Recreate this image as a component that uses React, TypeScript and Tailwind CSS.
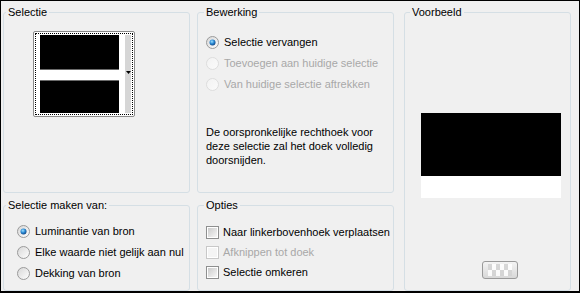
import type { ReactNode } from "react"

const Radio = ({ checked = false, disabled = false }: { checked?: boolean; disabled?: boolean }) => (
  <svg width="13" height="13" viewBox="0 0 13 13" className="shrink-0">
    <defs>
      <linearGradient id={disabled ? "rd" : "rf"} x1="0" y1="0" x2="1" y2="1">
        <stop offset="0" stopColor={disabled ? "#f2f2f2" : "#d6d6d6"} />
        <stop offset="1" stopColor={disabled ? "#fbfbfb" : "#ffffff"} />
      </linearGradient>
      <radialGradient id="rb" cx="0.4" cy="0.35" r="0.7">
        <stop offset="0" stopColor="#9fe0ff" />
        <stop offset="0.5" stopColor="#2a8ad4" />
        <stop offset="1" stopColor="#0d3f7e" />
      </radialGradient>
    </defs>
    <circle cx="6.5" cy="6.5" r="6" fill={`url(#${disabled ? "rd" : "rf"})`} stroke={disabled ? "#dcdcdc" : "#9a9a9a"} strokeWidth="1" />
    {checked && <circle cx="6.5" cy="6.5" r="3" fill="url(#rb)" />}
  </svg>
)

const Check = ({ disabled = false }: { disabled?: boolean }) => (
  <div className={`w-[13px] h-[13px] shrink-0 border p-px ${disabled ? "border-[#c8c8c8] bg-white" : "border-[#8e8f8f] bg-white"}`}>
    <div className={`w-full h-full ${disabled ? "bg-[#f4f4f4]" : "bg-gradient-to-br from-[#cbcbcb] to-[#f7f7f7]"}`} />
  </div>
)

// group box: legend sits on the border, padding goes on the inner div
const Group = ({ title, className, inner, legend, children }: { title: string; className: string; inner: string; legend: string; children: ReactNode }) => (
  <fieldset className={`border border-[#d5dfe5] rounded-[3px] min-w-0 ${className}`}>
    <legend className={`px-[2px] leading-[14px] ${legend}`}>{title}</legend>
    <div className={inner}>{children}</div>
  </fieldset>
)

const Opt = ({ label, checked, disabled }: { label: string; checked?: boolean; disabled?: boolean }) => (
  <div className="flex items-center h-[21px]">
    <Radio checked={checked} disabled={disabled} />
    <span className={`ml-[5px] ${disabled ? "text-[#a8a8a8]" : ""}`}>{label}</span>
  </div>
)

const Box = ({ label, disabled }: { label: string; disabled?: boolean }) => (
  <div className="flex items-center h-[20px]">
    <Check disabled={disabled} />
    <span className={`ml-[4px] ${disabled ? "text-[#a8a8a8]" : ""}`}>{label}</span>
  </div>
)

export default function App() {
  return (
    <div className="w-[580px] h-[293px] bg-[#f0f0f0] border-t border-l border-r border-b-2 border-black text-[11px] text-black font-['Liberation_Sans',Arial,sans-serif] flex pl-[2px] pt-[4px] gap-[7px]">
      <div className="w-[187px] flex flex-col gap-[5px]">
        <Group title="Selectie" className="h-[188px]" legend="ml-[2px]" inner="pl-[29px] pt-[12px]">
          <div className="w-[102px] h-[86px] border border-[#8a8a8a] rounded-[2px] bg-white p-px">
            <div className="h-full border border-dotted border-black flex pl-[4px] py-px">
              <div className="w-[79px] flex flex-col">
                <div className="h-[34px] bg-black" />
                <div className="h-[12px] bg-white border-y border-[#6a6a6a]" />
                <div className="flex-1 bg-black" />
              </div>
              <div className="w-[6px] bg-white" />
              <div className="w-[6px] bg-[#d6d6d6] flex flex-col items-center pt-[36px]">
                <svg width="5" height="3" viewBox="0 0 5 3"><path d="M0 0h5L2.5 3z" fill="#000" /></svg>
              </div>
            </div>
          </div>
        </Group>
        <Group title="Selectie maken van:" className="h-[93px]" legend="ml-[2px]" inner="pl-[13px] pt-[9px]">
          <Opt label="Luminantie van bron" checked />
          <Opt label="Elke waarde niet gelijk aan nul" />
          <Opt label="Dekking van bron" />
        </Group>
      </div>
      <div className="w-[197px] flex flex-col gap-[5px]">
        <Group title="Bewerking" className="h-[188px]" legend="ml-[6px]" inner="pl-[8px] pt-[13px]">
          <Opt label="Selectie vervangen" checked />
          <Opt label="Toevoegen aan huidige selectie" disabled />
          <Opt label="Van huidige selectie aftrekken" disabled />
          <p className="mt-[30px] leading-[14px]">
            De oorspronkelijke rechthoek voor
            <br />
            deze selectie zal het doek volledig
            <br />
            doorsnijden.
          </p>
        </Group>
        <Group title="Opties" className="h-[93px]" legend="ml-[6px]" inner="pl-[8px] pt-[10px]">
          <Box label="Naar linkerbovenhoek verplaatsen" />
          <Box label="Afknippen tot doek" disabled />
          <Box label="Selectie omkeren" />
        </Group>
      </div>
      <div className="w-[167px] ml-[3px]">
        <Group title="Voorbeeld" className="h-[286px]" legend="ml-[5px]" inner="pl-[16px] pt-[94px]">
          <div className="w-[140px] h-[85px] flex flex-col">
            <div className="h-[63px] bg-black" />
            <div className="flex-1 bg-white" />
          </div>
          <div className="ml-[61px] mt-[63px] w-[36px] h-[18px] rounded-[3px] border border-[#9a9a9a] bg-gradient-to-b from-[#f4f4f4] to-[#d8d8d8] flex items-center justify-center">
            <svg width="24" height="12" viewBox="0 0 24 12">
              {[0, 1, 2, 3, 4, 5].map((c) =>
                [0, 1].map((r) => (
                  <rect key={`${c}-${r}`} x={c * 4} y={r * 6} width="4" height="6" fill={(c + r) % 2 ? "#ffffff" : "#d2d2d2"} opacity="0.85" />
                ))
              )}
            </svg>
          </div>
        </Group>
      </div>
    </div>
  )
}
